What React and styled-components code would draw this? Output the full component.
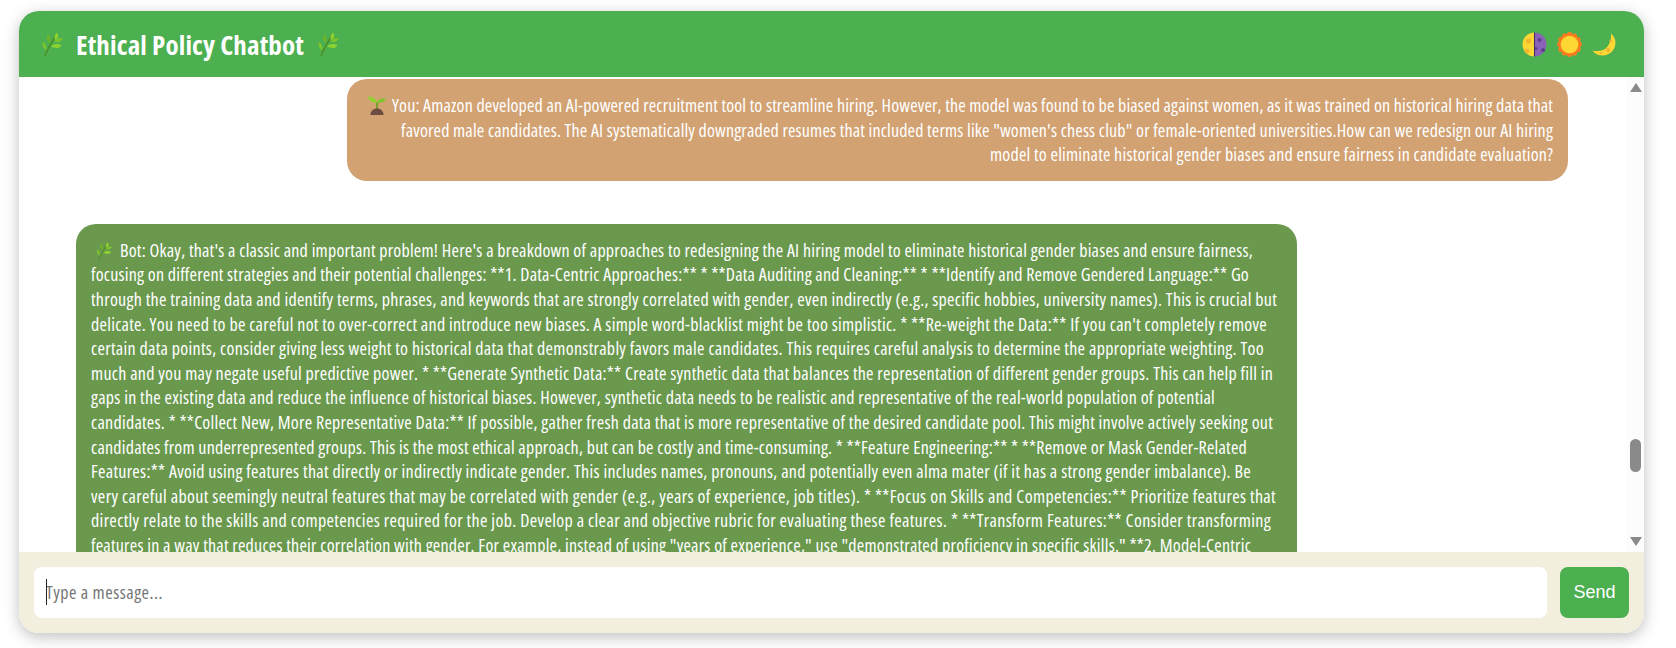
import React, { useLayoutEffect, useRef, useState } from "react"
import styled, { createGlobalStyle } from "styled-components"

const handFont = `"Open Sans", "Liberation Sans", sans-serif`

const GlobalStyle = createGlobalStyle`
  html, body {
    margin: 0;
    height: 100%;
    background: #fff;
  }
  body {
    box-sizing: border-box;
    padding: 11px 32px 15px 19px;
    font-family: ${handFont};
    font-stretch: 75%;
  }
  #root {
    height: 100%;
  }
`

const Card = styled.div`
  display: flex;
  flex-direction: column;
  height: 100%;
  border-radius: 20px;
  overflow: hidden;
  background: #fff;
  box-shadow: 0 4px 15px rgba(0, 0, 0, 0.25);
`

const Header = styled.header`
  flex: 0 0 66px;
  display: flex;
  align-items: center;
  justify-content: space-between;
  padding: 0 28px 0 21px;
  background: #4caf50;
  color: #fff;
`

const Title = styled.h1`
  display: flex;
  align-items: center;
  gap: 12px;
  margin: 0;
  font-size: 27px;
  font-weight: 700;
`

const Themes = styled.div`
  display: flex;
  align-items: center;
  gap: 10px;
`

const Body = styled.div`
  flex: 1;
  min-height: 0;
  display: flex;
`

const Messages = styled.div`
  flex: 1;
  min-width: 0;
  display: flex;
  flex-direction: column;
  gap: 43px;
  padding: 2px 59px 0 57px;
  overflow: hidden;
`

const Bubble = styled.div`
  flex: none;
  box-sizing: border-box;
  width: 1221px;
  padding: 14px 15px;
  border-radius: 20px;
  align-self: ${(p) => (p.$mine ? "flex-end" : "flex-start")};
  background: ${(p) => (p.$mine ? "#d2a273" : "#6a994e")};
  color: #fff;
  font-size: 18px;
  font-weight: 500;
  line-height: 24.6px;
  text-align: ${(p) => (p.$mine ? "right" : "left")};
`

const LineRow = styled.div`
  white-space: pre;
  height: 24.6px;
`

const Measure = styled.span`
  display: inline-block;
  white-space: pre;
`

const Rail = styled.div`
  flex: 0 0 17px;
  display: flex;
  flex-direction: column;
  align-items: center;
  background: #fcfcfc;
  padding: 6px 0 6px;
  box-sizing: border-box;
`

const Arrow = styled.div`
  width: 0;
  height: 0;
  border-left: 6px solid transparent;
  border-right: 6px solid transparent;
  ${(p) => (p.$down ? "border-top" : "border-bottom")}: 9px solid #8a8a8a;
`

const Track = styled.div`
  flex: 1;
  display: flex;
  flex-direction: column;
  justify-content: flex-end;
  padding-bottom: 65px;
`

const Thumb = styled.div`
  width: 11px;
  height: 33px;
  border-radius: 6px;
  background: #8a8a8a;
`

const Footer = styled.form`
  flex: 0 0 81px;
  box-sizing: border-box;
  display: flex;
  gap: 13px;
  padding: 15px;
  background: #f3efdf;
`

const InputWrap = styled.div`
  position: relative;
  flex: 1;
  min-width: 0;
  display: flex;
`

const Input = styled.input`
  flex: 1;
  min-width: 0;
  box-sizing: border-box;
  padding: 0 12px 2px;
  border: none;
  outline: none;
  border-radius: 8px;
  background: #fff;
  font-family: ${handFont};
  font-stretch: 75%;
  font-size: 18px;
  letter-spacing: 0.5px;
  caret-color: transparent;
  &::placeholder {
    color: #757575;
    opacity: 1;
  }
`

const Caret = styled.span`
  position: absolute;
  left: 12px;
  top: 12px;
  width: 1px;
  height: 26px;
  background: #222;
`

const SendButton = styled.button`
  flex: 0 0 69px;
  padding: 0;
  border: none;
  border-radius: 8px;
  background: #4caf50;
  color: #fff;
  font-family: "Liberation Sans", Arial, sans-serif;
  font-stretch: 100%;
  font-size: 18px;
`

const IconSvg = styled.svg`
  flex: none;
  display: ${(p) => (p.$inline ? "inline-block" : "block")};
  vertical-align: ${(p) => (p.$inline ? "-3px" : "baseline")};
`

const InlineIcon = styled.span`
  display: inline-block;
  margin: ${(p) => p.$margin};
`

// each line gets its own spacing so it ends where the original line ends
const FitText = ({ width, children }) => {
  const ref = useRef(null)
  const [spacing, setSpacing] = useState(0)

  useLayoutEffect(() => {
    const natural = ref.current.getBoundingClientRect().width
    setSpacing((width - natural) / children.length)
  }, [width, children])

  return (
    <Measure ref={ref} style={{ letterSpacing: `${spacing}px` }}>
      {children}
    </Measure>
  )
}

const Herb = ({ size = 22, inline }) => (
  <IconSvg $inline={inline} width={size} height={size} viewBox="1 0 23 26" fill="none">
    <path d="M5 25.500C8 18 12 11 18 2" stroke="#4c8a1e" strokeWidth="1.400" strokeLinecap="round" />
    <path d="M18 0.500c2 2.900 1.500 6.200-1.900 8.500C14.500 6 15.200 2.800 18 0.500z" fill="#8fd32e" />
    <path d="M24 7c-1.600 3.400-4.800 4.700-8.800 3.500C17 7.300 20.200 6 24 7z" fill="#7cc52a" />
    <path d="M8 2.500c2.700 2.100 3.500 5.200 1.700 9.300C7 9.300 6.100 6 8 2.500z" fill="#6fb524" />
    <path d="M23 14.500c-2.600 3.200-6.400 3.700-11.500 1.200 2.900-3 7.100-3.400 11.500-1.200z" fill="#8fd32e" />
    <path d="M2.500 10.500c3 1.700 4.400 4.800 3.700 9.500C3 18 1.700 14.400 2.500 10.500z" fill="#7cc52a" />
  </IconSvg>
)

const Seedling = ({ size = 20, inline }) => (
  <IconSvg $inline={inline} width={size} height={size} viewBox="0 0 20 20" fill="none">
    <path d="M10 15V7" stroke="#5f9e1e" strokeWidth="1.600" />
    <path d="M10 8C9.500 4 5.500 1.500 1 1.500 2 5.500 5.500 8 10 8z" fill="#8fd32e" />
    <path d="M10 7.500c.5-2.500 3.500-4.500 9-4-1 3-4.500 4.800-9 4z" fill="#7cc52a" />
    <path d="M3.500 20c0-4 2.800-6.500 6.500-6.500s6.500 2.500 6.500 6.500z" fill="#6d4c41" />
  </IconSvg>
)

const HalfMoon = () => (
  <IconSvg width="25" height="25" viewBox="0 0 25 25">
    <path d="M12.500 0.500a12 12 0 0 0 0 24z" fill="#fdd835" />
    <path d="M12.500 0.500a12 12 0 0 1 0 24z" fill="#8a63b8" />
    <circle cx="6.500" cy="9" r="2.700" fill="#f4b731" />
    <circle cx="5" cy="19" r="2.500" fill="#f4b731" />
    <circle cx="17.500" cy="8" r="2" fill="#5e3e8e" />
    <circle cx="14" cy="16.500" r="1.500" fill="#5e3e8e" />
    <circle cx="21" cy="18" r="2" fill="#5e3e8e" />
    <rect x="12" y="0.500" width="1" height="24" fill="#3f2a5e" />
  </IconSvg>
)

const sunPoints = Array.from({ length: 12 }, (_, i) => (i * Math.PI) / 6)

const Sun = () => (
  <IconSvg width="25" height="25" viewBox="0 0 25 25">
    {sunPoints.map((a) => (
      <circle key={a} cx={12.5 + 9.6 * Math.cos(a)} cy={12.5 + 9.6 * Math.sin(a)} r="2.800" fill="#ff7a1f" />
    ))}
    <circle cx="12.500" cy="12.500" r="10" fill="#ff7a1f" />
    <circle cx="12.500" cy="12.500" r="8.800" fill="#fdd835" />
  </IconSvg>
)

const Crescent = () => (
  <IconSvg width="24" height="25" viewBox="0 0 24 25">
    <path d="M19 1.500C24.500 6 25 14 20 19.500 15 24.500 5 25.500 0.500 18.500 7 20 12.500 18.500 15.500 14.500 18.500 10.500 19.500 6 19 1.500z" fill="#fdd835" />
    <circle cx="19" cy="9" r="1.600" fill="#f4b731" />
    <circle cx="16" cy="18" r="2.200" fill="#f4b731" />
    <circle cx="9" cy="21" r="1.200" fill="#f4b731" />
  </IconSvg>
)

const userLines = [
  { width: 1161, text: "You: Amazon developed an AI-powered recruitment tool to streamline hiring. However, the model was found to be biased against women, as it was trained on historical hiring data that" },
  { width: 1152, text: "favored male candidates. The AI systematically downgraded resumes that included terms like \"women's chess club\" or female-oriented universities.How can we redesign our AI hiring" },
  { width: 563, text: "model to eliminate historical gender biases and ensure fairness in candidate evaluation?" },
]

const botLines = [
  { width: 1133, text: "Bot: Okay, that's a classic and important problem! Here's a breakdown of approaches to redesigning the AI hiring model to eliminate historical gender biases and ensure fairness," },
  { width: 1158, text: "focusing on different strategies and their potential challenges: **1. Data-Centric Approaches:** * **Data Auditing and Cleaning:** * **Identify and Remove Gendered Language:** Go" },
  { width: 1186, text: "through the training data and identify terms, phrases, and keywords that are strongly correlated with gender, even indirectly (e.g., specific hobbies, university names). This is crucial but" },
  { width: 1176, text: "delicate. You need to be careful not to over-correct and introduce new biases. A simple word-blacklist might be too simplistic. * **Re-weight the Data:** If you can't completely remove" },
  { width: 1173, text: "certain data points, consider giving less weight to historical data that demonstrably favors male candidates. This requires careful analysis to determine the appropriate weighting. Too" },
  { width: 1182, text: "much and you may negate useful predictive power. * **Generate Synthetic Data:** Create synthetic data that balances the representation of different gender groups. This can help fill in" },
  { width: 1124, text: "gaps in the existing data and reduce the influence of historical biases. However, synthetic data needs to be realistic and representative of the real-world population of potential" },
  { width: 1182, text: "candidates. * **Collect New, More Representative Data:** If possible, gather fresh data that is more representative of the desired candidate pool. This might involve actively seeking out" },
  { width: 1156, text: "candidates from underrepresented groups. This is the most ethical approach, but can be costly and time-consuming. * **Feature Engineering:** * **Remove or Mask Gender-Related" },
  { width: 1160, text: "Features:** Avoid using features that directly or indirectly indicate gender. This includes names, pronouns, and potentially even alma mater (if it has a strong gender imbalance). Be" },
  { width: 1185, text: "very careful about seemingly neutral features that may be correlated with gender (e.g., years of experience, job titles). * **Focus on Skills and Competencies:** Prioritize features that" },
  { width: 1180, text: "directly relate to the skills and competencies required for the job. Develop a clear and objective rubric for evaluating these features. * **Transform Features:** Consider transforming" },
  { width: 1160, text: "features in a way that reduces their correlation with gender. For example, instead of using \"years of experience,\" use \"demonstrated proficiency in specific skills.\" **2. Model-Centric" },
]

const MessageLines = ({ lines, icon }) =>
  lines.map((line, i) => (
    <LineRow key={line.text}>
      {i === 0 && icon}
      <FitText width={line.width}>{line.text}</FitText>
    </LineRow>
  ))

export default function App() {
  return (
    <>
      <GlobalStyle />
      <Card>
        <Header>
          <Title>
            <Herb size={24} />
            <FitText width={228}>Ethical Policy Chatbot</FitText>
            <Herb size={24} />
          </Title>
          <Themes>
            <HalfMoon />
            <Sun />
            <Crescent />
          </Themes>
        </Header>
        <Body>
          <Messages>
            <Bubble $mine>
              <MessageLines
                lines={userLines}
                icon={
                  <InlineIcon $margin="0 5px 0 0">
                    <Seedling inline />
                  </InlineIcon>
                }
              />
            </Bubble>
            <Bubble>
              <MessageLines
                lines={botLines}
                icon={
                  <InlineIcon $margin="0 7px 0 4px">
                    <Herb size={18} inline />
                  </InlineIcon>
                }
              />
            </Bubble>
          </Messages>
          <Rail>
            <Arrow />
            <Track>
              <Thumb />
            </Track>
            <Arrow $down />
          </Rail>
        </Body>
        <Footer onSubmit={(e) => e.preventDefault()}>
          <InputWrap>
            <Input placeholder="Type a message..." />
            <Caret />
          </InputWrap>
          <SendButton type="submit">Send</SendButton>
        </Footer>
      </Card>
    </>
  )
}
